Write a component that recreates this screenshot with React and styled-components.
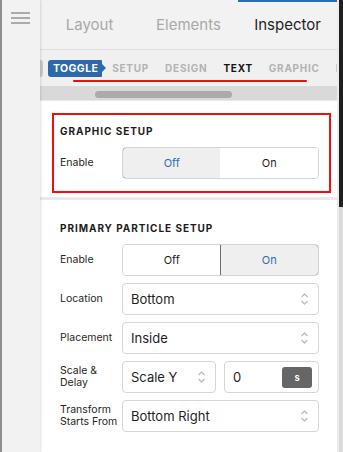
import React from "react";
import styled, { createGlobalStyle } from "styled-components";

const Global = createGlobalStyle`
  html, body { margin: 0; padding: 0; }
  body { font-family: Inter, "Noto Sans", "Liberation Sans", sans-serif; background: #fff; }
  #root { width: 343px; height: 452px; overflow: hidden; }
`;

const Shell = styled.div`
  display: flex;
  width: 343px;
  height: 452px;
  overflow: hidden;
`;

const Sidebar = styled.div`
  width: 40px;
  flex: none;
  background: #f2f2f2;
  border-left: 2px solid #8e8e8e;
  box-shadow: 1px 0 2px rgba(0, 0, 0, 0.12);
  position: relative;
  z-index: 2;
  display: flex;
  flex-direction: column;
  align-items: flex-start;
  padding: 12px 0 0 9px;
  box-sizing: border-box;
  gap: 3px;
`;

const Bar = styled.span`
  display: block;
  width: 19px;
  height: 2px;
  background: #ababab;
`;

const Main = styled.div`
  flex: 1;
  min-width: 0;
  display: flex;
  flex-direction: column;
  background: #e9e9e9;
  border-right: 2px solid #ececec;
`;

const Header = styled.div`
  height: 49px;
  flex: none;
  display: grid;
  grid-template-columns: repeat(3, 1fr);
  background: #f2f2f2;
  border-bottom: 1px solid #dedede;
`;

const TopTab = styled.div`
  display: flex;
  align-items: center;
  justify-content: center;
  font-size: 15px;
  color: ${(p) => (p.$active ? "#1f1f1f" : "#a9a9a9")};
  border-top: 2px solid ${(p) => (p.$active ? "#2f6db3" : "transparent")};
  padding-bottom: 2px;
`;

const Strip = styled.div`
  height: 36px;
  flex: none;
  background: #f0f0f0;
  display: flex;
  align-items: center;
  position: relative;
  white-space: nowrap;
  overflow: hidden;
`;

const Peek = styled.span`
  width: 3px;
  height: 17px;
  border-radius: 0 3px 3px 0;
  background: #c9c9c9;
  flex: none;
  margin-right: 5px;
`;

const Badge = styled.span`
  position: relative;
  flex: none;
  height: 17px;
  padding: 0 4px 0 5px;
  margin-right: 10px;
  display: flex;
  align-items: center;
  background: #2b69ac;
  color: #fff;
  font-size: 10.5px;
  font-weight: 700;
  letter-spacing: 0.4px;
  border-radius: 3px 1px 1px 3px;
  &::after {
    content: "";
    position: absolute;
    right: -4px;
    top: 4.5px;
    border-left: 4px solid #2b69ac;
    border-top: 4px solid transparent;
    border-bottom: 4px solid transparent;
  }
`;

const StripItem = styled.span`
  flex: none;
  font-size: 10px;
  font-weight: 700;
  letter-spacing: 0.75px;
  color: ${(p) => (p.$active ? "#151515" : "#b3b3b3")};
  margin-right: 16px;
`;

const RedLine = styled.span`
  position: absolute;
  left: 33px;
  top: 30px;
  width: 234px;
  height: 2px;
  border-radius: 1px;
  background: #f20d0d;
`;

const ScrollRow = styled.div`
  height: 14px;
  flex: none;
  background: #d9d9d9;
  display: flex;
  align-items: center;
  padding-left: 55px;
  padding-top: 2px;
  box-sizing: border-box;
`;

const Thumb = styled.span`
  width: 137px;
  height: 7px;
  border-radius: 4px;
  background: #ababab;
`;

const Content = styled.div`
  flex: 1;
  display: flex;
  flex-direction: column;
  gap: 3px;
  padding-top: 1px;
`;

const Card = styled.section`
  position: relative;
  background: #fff;
  padding: ${(p) => p.$pad};
  display: flex;
  flex-direction: column;
  gap: 7px;
  flex: ${(p) => (p.$grow ? 1 : "none")};
`;

const Heading = styled.h3`
  margin: 0 0 3px 0;
  font-size: 10px;
  font-weight: 700;
  letter-spacing: 0.95px;
  color: #1c1c1c;
  line-height: 12px;
`;

const RedBox = styled.span`
  position: absolute;
  left: 12px;
  top: 12px;
  right: 6px;
  bottom: 4px;
  border: 2px solid #f20d0d;
  pointer-events: none;
`;

const Row = styled.div`
  display: grid;
  grid-template-columns: 62px 197px;
  align-items: center;
  height: 32px;
`;

const Label = styled.span`
  font-size: 10.5px;
  color: #262626;
  line-height: 12.5px;
`;

const Segmented = styled.div`
  display: grid;
  grid-template-columns: 1fr 1fr;
  height: 32px;
  border: 1px solid #d3d3d3;
  border-radius: 4px;
  box-sizing: border-box;
  overflow: hidden;
`;

const Seg = styled.div`
  display: flex;
  align-items: center;
  justify-content: center;
  font-size: 11px;
  margin: -1px;
  color: ${(p) => (p.$on ? "#2c6db4" : "#1f1f1f")};
  background: ${(p) => (p.$on ? "#efefef" : "#fff")};
  border: 1px solid ${(p) => (p.$on ? "#6e6e6e" : "transparent")};
  border-radius: ${(p) => (p.$first ? "4px 0 0 4px" : "0 4px 4px 0")};
`;

const Field = styled.div`
  height: 32px;
  box-sizing: border-box;
  border: 1px solid #d6d6d6;
  border-radius: 4px;
  display: flex;
  align-items: center;
  padding: 0 6px 0 8px;
  font-size: 13px;
  color: #1f1f1f;
  background: #fff;
`;

const FieldText = styled.span`
  flex: 1;
`;

const Pair = styled.div`
  display: grid;
  grid-template-columns: 94px 95px;
  gap: 8px;
`;

const Unit = styled.span`
  width: 30px;
  height: 21px;
  border-radius: 3px;
  background: #666;
  color: #fff;
  font-size: 9.5px;
  font-weight: 600;
  display: flex;
  align-items: center;
  justify-content: center;
`;

const Arrows = () => (
  <svg width="9" height="14" viewBox="0 0 9 14" style={{ flex: "none", marginRight: 3 }}>
    <path d="M1.5 5 L4.5 2 L7.5 5" fill="none" stroke="#bdbdbd" strokeWidth="1.3" />
    <path d="M1.5 9 L4.5 12 L7.5 9" fill="none" stroke="#bdbdbd" strokeWidth="1.3" />
  </svg>
);

const Select = ({ children }) => (
  <Field>
    <FieldText>{children}</FieldText>
    <Arrows />
  </Field>
);

const Toggle = ({ value }) => (
  <Segmented>
    <Seg $first $on={value === "off"}>Off</Seg>
    <Seg $on={value === "on"}>On</Seg>
  </Segmented>
);

const ScrollBar = styled.div`
  width: 4px;
  flex: none;
  background: #dcdcdc;
  display: flex;
  flex-direction: column;
`;

const ScrollThumb = styled.span`
  height: 207px;
  background: #1f1f1f;
`;

export default function App() {
  return (
    <>
      <Global />
      <Shell>
        <Sidebar>
          <Bar />
          <Bar />
          <Bar />
        </Sidebar>
        <Main>
          <Header>
            <TopTab>Layout</TopTab>
            <TopTab>Elements</TopTab>
            <TopTab $active>Inspector</TopTab>
          </Header>
          <Strip>
            <Peek />
            <Badge>TOGGLE</Badge>
            <StripItem>SETUP</StripItem>
            <StripItem>DESIGN</StripItem>
            <StripItem $active>TEXT</StripItem>
            <StripItem>GRAPHIC</StripItem>
            <StripItem>P</StripItem>
            <RedLine />
          </Strip>
          <ScrollRow>
            <Thumb />
          </ScrollRow>
          <Content>
            <Card $pad="24px 0 18px 20px">
              <Heading>GRAPHIC SETUP</Heading>
              <Row>
                <Label>Enable</Label>
                <Toggle value="off" />
              </Row>
              <RedBox />
            </Card>
            <Card $pad="22px 0 18px 20px" $grow>
              <Heading>PRIMARY PARTICLE SETUP</Heading>
              <Row>
                <Label>Enable</Label>
                <Toggle value="on" />
              </Row>
              <Row>
                <Label>Location</Label>
                <Select>Bottom</Select>
              </Row>
              <Row>
                <Label>Placement</Label>
                <Select>Inside</Select>
              </Row>
              <Row>
                <Label>
                  Scale &amp;
                  <br />
                  Delay
                </Label>
                <Pair>
                  <Select>Scale Y</Select>
                  <Field>
                    <FieldText>0</FieldText>
                    <Unit>s</Unit>
                  </Field>
                </Pair>
              </Row>
              <Row>
                <Label>
                  Transform
                  <br />
                  Starts From
                </Label>
                <Select>Bottom Right</Select>
              </Row>
            </Card>
          </Content>
        </Main>
        <ScrollBar>
          <ScrollThumb />
        </ScrollBar>
      </Shell>
    </>
  );
}
